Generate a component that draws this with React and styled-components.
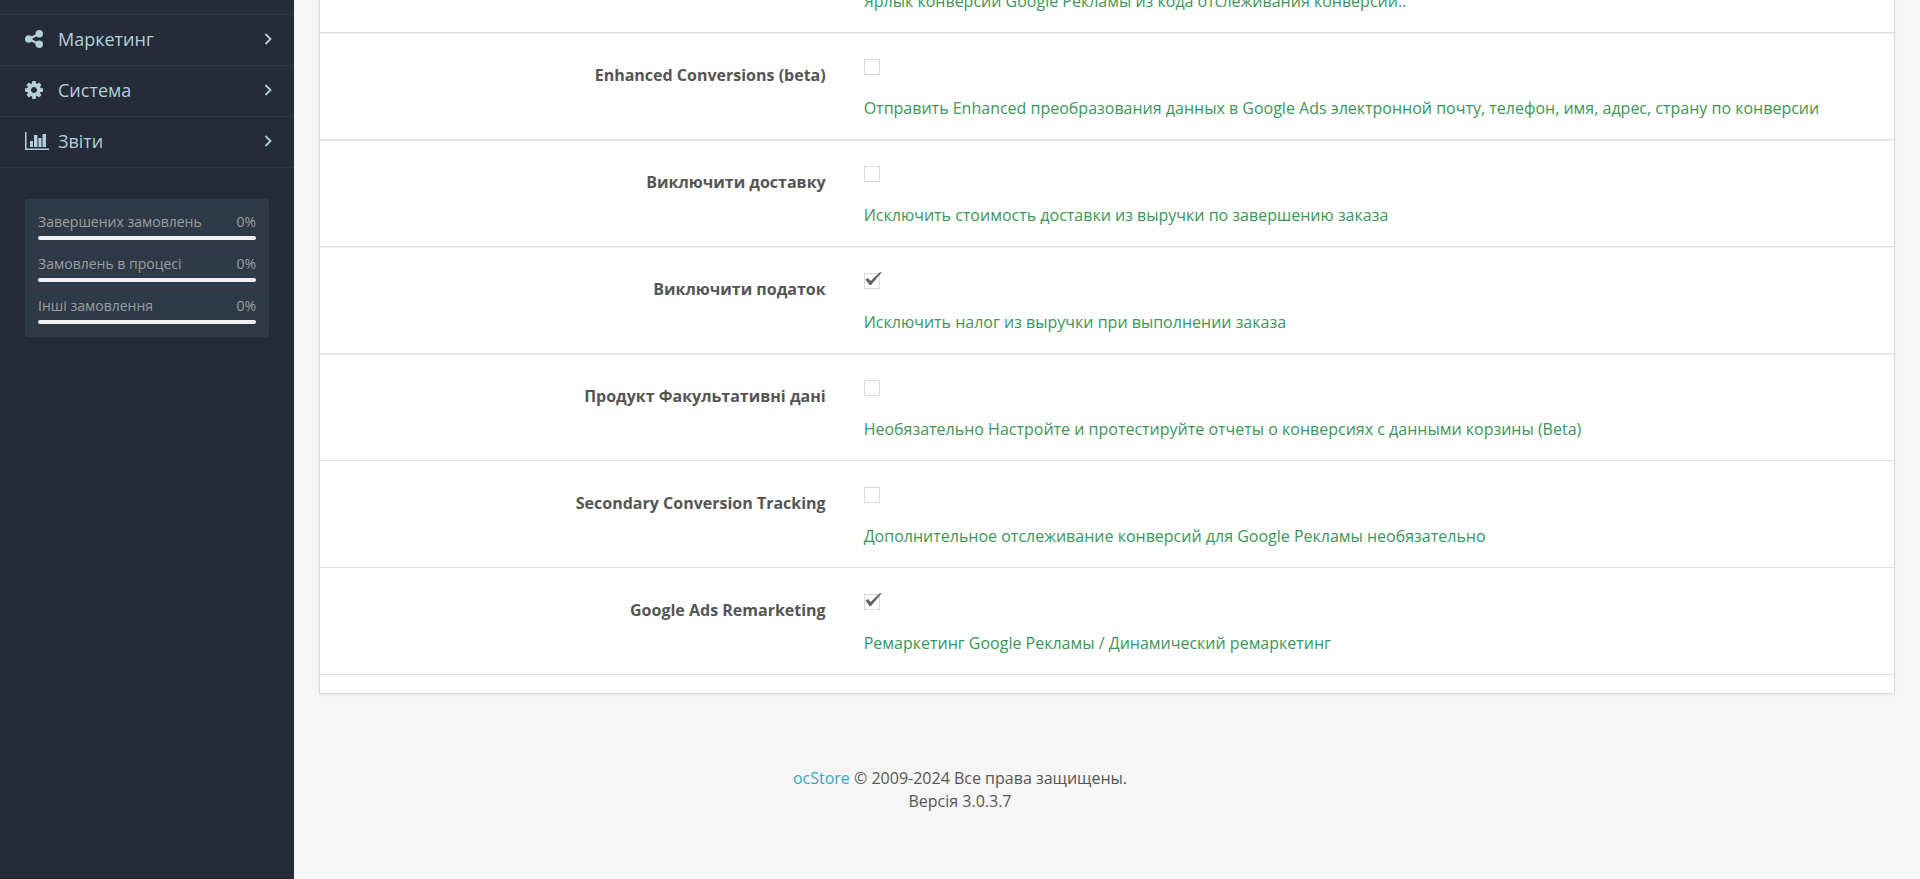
import React from "react";
import styled, { createGlobalStyle } from "styled-components";

const menu = [
  { id: "marketing", title: "Маркетинг", icon: ShareNodes },
  { id: "system", title: "Система", icon: Cog },
  { id: "reports", title: "Звіти", icon: BarChart },
];

const stats = [
  { id: "complete", title: "Завершених замовлень", value: 0 },
  { id: "processing", title: "Замовлень в процесі", value: 0 },
  { id: "other", title: "Інші замовлення", value: 0 },
];

const settings = [
  {
    id: "enhanced",
    label: "Enhanced Conversions (beta)",
    help: "Отправить Enhanced преобразования данных в Google Ads электронной почту, телефон, имя, адрес, страну по конверсии",
    checked: false,
  },
  {
    id: "shipping",
    label: "Виключити доставку",
    help: "Исключить стоимость доставки из выручки по завершению заказа",
    checked: false,
  },
  {
    id: "tax",
    label: "Виключити податок",
    help: "Исключить налог из выручки при выполнении заказа",
    checked: true,
  },
  {
    id: "product",
    label: "Продукт Факультативні дані",
    help: "Необязательно Настройте и протестируйте отчеты о конверсиях с данными корзины (Beta)",
    checked: false,
  },
  {
    id: "secondary",
    label: "Secondary Conversion Tracking",
    help: "Дополнительное отслеживание конверсий для Google Рекламы необязательно",
    checked: false,
  },
  {
    id: "remarketing",
    label: "Google Ads Remarketing",
    help: "Ремаркетинг Google Рекламы / Динамический ремаркетинг",
    checked: true,
  },
];

function ShareNodes() {
  return (
    <svg viewBox="0 0 18 18" fill="currentColor">
      <path
        d="M14.250 3.750L3.750 9l10.500 5.250"
        fill="none"
        stroke="currentColor"
        strokeWidth="2.200"
      />
      <circle cx="14.250" cy="3.750" r="3.750" />
      <circle cx="3.750" cy="9" r="3.750" />
      <circle cx="14.250" cy="14.250" r="3.750" />
    </svg>
  );
}

function Cog() {
  return (
    <svg viewBox="128 128 1536 1536" fill="currentColor">
      <path d="M1152 896q0-106-75-181t-181-75-181 75-75 181 75 181 181 75 181-75 75-181zm512-109v222q0 12-8 23t-20 13l-185 28q-19 54-39 91 35 50 107 138 10 12 10 25t-9 23q-27 37-99 108t-94 71q-12 0-26-9l-138-108q-44 23-91 38-16 136-29 186-7 28-36 28h-222q-14 0-24.500-8.500t-11.500-21.500l-28-184q-49-16-90-37l-141 107q-10 9-25 9-14 0-25-11-126-114-165-168-7-10-7-23 0-12 8-23 15-21 51-66.500t54-70.500q-27-50-41-99l-183-27q-13-2-21-12.500t-8-23.500v-222q0-12 8-23t19-13l186-28q14-46 39-92-40-57-107-138-10-12-10-24 0-10 9-23 26-36 98.500-107.500t94.500-71.500q13 0 26 10l138 107q44-23 91-38 16-136 29-186 7-28 36-28h222q14 0 24.500 8.500t11.500 21.500l28 184q49 16 90 37l142-107q9-9 24-9 13 0 25 10 129 119 165 170 7 8 7 22 0 12-8 23-15 21-51 66.500t-54 70.500q26 50 41 98l183 28q13 2 21 12.500t8 23.500z" />
    </svg>
  );
}

function BarChart() {
  return (
    <svg className="wide" viewBox="0 0 24 18" fill="currentColor">
      <path d="M0 0h1.500v16.500H24V18H0zM5 9h3v6H5zM9 3h3.500v12H9zM13.500 6h3v9h-3zM17.500 2H21v13h-3.500z" />
    </svg>
  );
}

const Chevron = () => (
  <svg width="8" height="12" viewBox="0 0 8 12" fill="none">
    <path d="M1.500 1l5 5-5 5" stroke="currentColor" strokeWidth="1.800" />
  </svg>
);

const Setting = ({ item }) => (
  <Row>
    <Label htmlFor={item.id}>{item.label}</Label>
    <Field>
      <CheckWrap>
        <Checkbox
          type="checkbox"
          id={item.id}
          defaultChecked={item.checked}
          aria-describedby={`${item.id}-help`}
        />
        <CheckMark viewBox="0 0 18 14">
          <path d="M0.500 7.500L3 6l2.500 3L14.500 0.500 17 0 6 13H4.500z" />
        </CheckMark>
      </CheckWrap>
      <Help id={`${item.id}-help`}>{item.help}</Help>
    </Field>
  </Row>
);

const App = () => {
  return (
    <Page>
      <GlobalStyle />
      <Sidebar>
        <nav>
          {menu.map(({ id, title, icon: Icon }) => (
            <MenuLink href={`#${id}`} key={id}>
              <IconBox>
                <Icon />
              </IconBox>
              <MenuText>{title}</MenuText>
              <Chevron />
            </MenuLink>
          ))}
        </nav>
        <Stats>
          {stats.map((stat) => (
            <Stat key={stat.id}>
              <StatLine>
                <span>{stat.title}</span>
                <span>{stat.value}%</span>
              </StatLine>
              <Track>
                <Fill style={{ width: `${stat.value}%` }} />
              </Track>
            </Stat>
          ))}
        </Stats>
      </Sidebar>
      <Main>
        <Panel>
          <FirstRow>
            <Help>
              Ярлык конверсии Google Рекламы из кода отслеживания конверсии..
            </Help>
          </FirstRow>
          {settings.map((item) => (
            <Setting item={item} key={item.id} />
          ))}
        </Panel>
      </Main>
      <Footer>
        <a href="#ocstore">ocStore</a> © 2009-2024 Все права защищены.
        <br />
        Версія 3.0.3.7
      </Footer>
    </Page>
  );
};

export default App;

const GlobalStyle = createGlobalStyle`
  * {
    box-sizing: border-box;
  }

  body {
    margin: 0;
    background: #f6f6f6;
    color: #555;
    font: 16px/23px "Open Sans", sans-serif;
  }
`;

const Page = styled.div`
  display: grid;
  grid-template-columns: 294px 1fr;
  grid-template-rows: auto 1fr;
  min-height: 100vh;
  overflow: hidden;
`;

const Sidebar = styled.aside`
  grid-column: 1;
  grid-row: 1 / 3;
  padding-top: 14px;
  background: #252c37;
  border-bottom: 1px solid #252331;
`;

const MenuLink = styled.a`
  display: flex;
  align-items: center;
  height: 51px;
  padding: 0 22px 2px 25px;
  border-top: 1px solid #2c3742;
  color: #b3cfdc;
  font-size: 18px;
  text-decoration: none;

  &:last-child {
    height: 52px;
    border-bottom: 1px solid #2c3742;
  }
`;

const IconBox = styled.span`
  display: flex;
  width: 33px;

  svg {
    width: 18px;
    height: 18px;
  }

  svg.wide {
    width: 24px;
  }
`;

const MenuText = styled.span`
  flex: 1;
`;

const Stats = styled.section`
  margin: 31px 25px 0;
  padding: 6px 0;
  border-radius: 3px;
  background: #2e3a47;
`;

const Stat = styled.div`
  padding: 5px 13px 6px;
  border-bottom: 1px solid #3a3841;
`;

const StatLine = styled.div`
  display: flex;
  justify-content: space-between;
  margin-bottom: 3px;
  color: #9d9f9f;
  font-size: 14px;
`;

const Track = styled.div`
  height: 4px;
  border-radius: 2px;
  background: #f0f0f0;
  overflow: hidden;
`;

const Fill = styled.div`
  height: 100%;
  background: #4caf50;
`;

const Main = styled.main`
  grid-column: 2;
  grid-row: 1;
  padding: 0 25px;
`;

const Panel = styled.section`
  padding-bottom: 18px;
  background: #fff;
  border: 1px solid #dcdcdc;
  border-top: 0;
  box-shadow: 0 1px 2px rgba(0, 0, 0, 0.08);
`;

const Row = styled.div`
  display: grid;
  grid-template-columns: 1fr 2fr;
  min-height: 107px;
  padding-top: 26px;
  border-bottom: 1px solid #e1e1e1;

  &:nth-child(-n + 4) {
    box-shadow: 0 1px #eee;
  }
`;

const FirstRow = styled(Row)`
  min-height: 33px;
  margin-top: -10px;
  padding: 0 0 19px;

  p {
    grid-column: 2;
    margin-left: 19px;
  }
`;

const Label = styled.label`
  padding: 5px 19px 0;
  font-weight: 700;
  text-align: right;
`;

const Field = styled.div`
  padding: 0 19px;
`;

const CheckWrap = styled.span`
  display: block;
  position: relative;
  width: 16px;
  height: 16px;
`;

const Checkbox = styled.input`
  appearance: none;
  display: block;
  width: 16px;
  height: 16px;
  margin: 0;
  border: 1px solid #dadada;
  background: #fff;
`;

const CheckMark = styled.svg`
  position: absolute;
  top: -1px;
  left: 1px;
  width: 18px;
  height: 14px;
  fill: #5f6663;
  visibility: hidden;
  pointer-events: none;

  ${Checkbox}:checked + & {
    visibility: visible;
  }
`;

const Help = styled.p`
  margin: 0;
  color: #3c9659;

  ${CheckWrap} + & {
    margin-top: 22px;
  }
`;

const Footer = styled.footer`
  grid-column: 1 / 3;
  grid-row: 2;
  padding: 73px 0 65px;
  text-align: center;

  a {
    color: #35a6cb;
    text-decoration: none;
  }
`;
